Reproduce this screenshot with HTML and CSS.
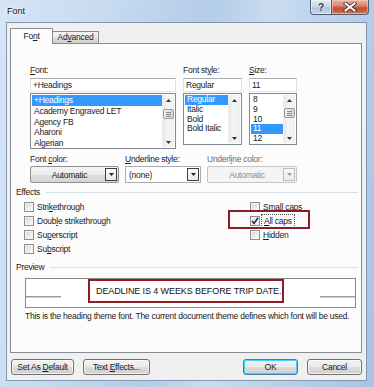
FILE: index.html
```html
<!DOCTYPE html>
<html>
<head>
<meta charset="utf-8">
<title>Font</title>
<link rel="stylesheet" href="styles.css">
</head>
<body>
<div class="window">
  <div class="titlebar">
    <span class="title">Font</span>
    <div class="caption">
      <div class="cap help">?</div>
      <div class="cap close">
        <svg width="14" height="10" viewBox="0 0 14 10"><path d="M2.5 1.5 L11.5 8.5 M11.5 1.5 L2.5 8.5" stroke="#3b2a28" stroke-width="3.6" stroke-linecap="square"/><path d="M2.5 1.5 L11.5 8.5 M11.5 1.5 L2.5 8.5" stroke="#ffffff" stroke-width="2" stroke-linecap="square"/></svg>
      </div>
    </div>
  </div>
  <div class="client">
    <div class="tabs">
      <div class="tab active">Fo<u>n</u>t</div>
      <div class="tab">Ad<u>v</u>anced</div>
    </div>
    <div class="panel">
      <div class="pickers">
        <div class="col col-font">
          <div class="lbl"><u>F</u>ont:</div>
          <div class="input">+Headings</div>
          <div class="list list-font">
            <div class="items">
              <div class="item sel">+Headings</div>
              <div class="item">Academy Engraved LET</div>
              <div class="item">Agency FB</div>
              <div class="item">Aharoni</div>
              <div class="item">Algerian</div>
            </div>
            <div class="sb">
              <div class="sb-btn"><svg width="5" height="3" viewBox="0 0 5 3"><path d="M0 3 L2.5 0 L5 3Z" fill="#333"/></svg></div>
              <div class="sb-thumb thumb-font"><i></i><i></i><i></i></div>
              <div class="sb-track"></div>
              <div class="sb-btn"><svg width="5" height="3" viewBox="0 0 5 3"><path d="M0 0 L2.5 3 L5 0Z" fill="#333"/></svg></div>
            </div>
          </div>
        </div>
        <div class="col col-style">
          <div class="lbl">Font st<u>y</u>le:</div>
          <div class="input">Regular</div>
          <div class="list list-short">
            <div class="items">
              <div class="item short sel">Regular</div>
              <div class="item short">Italic</div>
              <div class="item short">Bold</div>
              <div class="item short">Bold Italic</div>
            </div>
            <div class="sb">
              <div class="sb-btn"><svg width="5" height="3" viewBox="0 0 5 3"><path d="M0 3 L2.5 0 L5 3Z" fill="#333"/></svg></div>
              <div class="sb-track"></div>
              <div class="sb-btn"><svg width="5" height="3" viewBox="0 0 5 3"><path d="M0 0 L2.5 3 L5 0Z" fill="#333"/></svg></div>
            </div>
          </div>
        </div>
        <div class="col col-size">
          <div class="lbl"><u>S</u>ize:</div>
          <div class="input">11</div>
          <div class="list list-short">
            <div class="items">
              <div class="item short">8</div>
              <div class="item short">9</div>
              <div class="item short">10</div>
              <div class="item short sel">11</div>
              <div class="item short">12</div>
            </div>
            <div class="sb">
              <div class="sb-btn"><svg width="5" height="3" viewBox="0 0 5 3"><path d="M0 3 L2.5 0 L5 3Z" fill="#333"/></svg></div>
              <div class="sb-thumb thumb-size"><i></i><i></i><i></i></div>
              <div class="sb-track"></div>
              <div class="sb-btn"><svg width="5" height="3" viewBox="0 0 5 3"><path d="M0 0 L2.5 3 L5 0Z" fill="#333"/></svg></div>
            </div>
          </div>
        </div>
      </div>

      <div class="drops">
        <div class="dcol dcol-color">
          <div class="lbl">Font <u>c</u>olor:</div>
          <div class="combo combo-btn">
            <span class="combo-text center">Automatic</span>
            <span class="arrow dark"><svg width="5" height="3" viewBox="0 0 5 3"><path d="M0 0 L2.5 3 L5 0Z" fill="#222"/></svg></span>
          </div>
        </div>
        <div class="dcol dcol-ustyle">
          <div class="lbl"><u>U</u>nderline style:</div>
          <div class="combo combo-white">
            <span class="combo-text">(none)</span>
            <span class="arrow dark"><svg width="5" height="3" viewBox="0 0 5 3"><path d="M0 0 L2.5 3 L5 0Z" fill="#222"/></svg></span>
          </div>
        </div>
        <div class="dcol dcol-ucolor">
          <div class="lbl disabled-lbl">Underl<u>i</u>ne color:</div>
          <div class="combo combo-disabled">
            <span class="combo-text center">Automatic</span>
            <span class="arrow light"><svg width="5" height="3" viewBox="0 0 5 3"><path d="M0 0 L2.5 3 L5 0Z" fill="#9a9a9a"/></svg></span>
          </div>
        </div>
      </div>

      <div class="group-head"><span>Effects</span><span class="rule"></span></div>
      <div class="effects">
        <div class="ecol">
          <div class="chk"><span class="box"></span><span>Stri<u>k</u>ethrough</span></div>
          <div class="chk"><span class="box"></span><span>Doub<u>l</u>e strikethrough</span></div>
          <div class="chk"><span class="box"></span><span>Su<u>p</u>erscript</span></div>
          <div class="chk"><span class="box"></span><span>Su<u>b</u>script</span></div>
        </div>
        <div class="ecol">
          <div class="chk"><span class="box"></span><span>S<u>m</u>all caps</span></div>
          <div class="chk"><span class="box checked"><svg width="8" height="8" viewBox="0 0 8 8"><path d="M1 4 L3 6.5 L7 0.8" fill="none" stroke="#1e2f5a" stroke-width="1.5"/></svg></span><span class="focus"><u>A</u>ll caps</span></div>
          <div class="chk"><span class="box"></span><span><u>H</u>idden</span></div>
        </div>
        <div class="callout"></div>
      </div>

      <div class="group-head preview-head"><span>Preview</span><span class="rule"></span></div>
      <div class="preview">
        <span class="pline"></span>
        <span class="ptext">DEADLINE IS 4 WEEKS BEFORE TRIP DATE.</span>
        <span class="pline right"></span>
      </div>
      <div class="desc">This is the heading theme font. The current document theme defines which font will be used.</div>
    </div>

    <div class="buttons">
      <div class="btn w-default">Set As <u>D</u>efault</div>
      <div class="btn w-effects">Text <u>E</u>ffects...</div>
      <div class="btn ok focused">OK</div>
      <div class="btn cancel">Cancel</div>
    </div>
  </div>
</div>
</body>
</html>
```

FILE: styles.css
```css
* { box-sizing: border-box; }
html, body { margin: 0; padding: 0; }
body {
  width: 374px;
  height: 387px;
  overflow: hidden;
  font-family: "Liberation Sans", Arial, sans-serif;
  font-size: 8.5px;
  letter-spacing: -0.25px;
  color: #1b1b1b;
}
u { text-decoration-thickness: 1px; text-underline-offset: 1px; }

.window {
  width: 374px;
  height: 387px;
  display: flex;
  flex-direction: column;
  background: linear-gradient(100deg, #d6e5f5 0%, #c6daf0 25%, #b3cce8 48%, #c9dcf1 62%, #b7cfe9 80%, #a9c3e2 100%);
}

.titlebar {
  height: 22px;
  flex: none;
  display: flex;
  align-items: flex-start;
  padding-left: 7px;
}
.title {
  margin-top: 6px;
  font-size: 9px;
  line-height: 11px;
  letter-spacing: 0;
  color: #111;
  text-shadow: 0 0 3px #ffffff, 0 0 5px #ffffff;
}
.caption {
  margin-left: auto;
  margin-right: 5px;
  display: flex;
  height: 15px;
}
.cap {
  height: 15px;
  border: 1px solid #505e72;
  border-top: none;
  display: flex;
  align-items: center;
  justify-content: center;
}
.help {
  width: 22px;
  border-radius: 0 0 0 4px;
  background: linear-gradient(#dde8f4 0%, #c8d8ea 45%, #b3c7de 55%, #c3d5ea 100%);
  box-shadow: inset 0 0 0 1px rgba(255,255,255,0.5);
  font-size: 10px;
  font-weight: bold;
  color: #2b3a4c;
  text-shadow: 0 0 2px #fff;
  letter-spacing: 0;
}
.close {
  width: 37px;
  border-left: none;
  border-radius: 0 0 4px 0;
  background: linear-gradient(#eab0a2 0%, #d98a76 40%, #c7523b 55%, #c9573c 80%, #da8e6a 100%);
  box-shadow: inset 0 0 0 1px rgba(255,220,210,0.45);
}

.client {
  margin: 0 7px 0 6px;
  height: 359px;
  flex: none;
  background: #f0f0f0;
  border: 1px solid #8396ad;
  display: flex;
  flex-direction: column;
}

.tabs {
  display: flex;
  align-items: flex-end;
  height: 15px;
  margin: 5px 0 0 3px;
}
.tab {
  height: 12px;
  width: 47px;
  margin-left: -1px;
  border: 1px solid #898c95;
  border-bottom: none;
  background: linear-gradient(#f3f3f3 0%, #ebebeb 50%, #dddddd 51%, #cfcfcf 100%);
  text-align: center;
  line-height: 11px;
}
.tab.active {
  height: 16px;
  width: 43px;
  margin-left: 0;
  margin-bottom: -1px;
  position: relative;
  z-index: 1;
  background: #fcfcfc;
  line-height: 14px;
}

.panel {
  width: 352px;
  height: 310px;
  margin-left: 3px;
  border: 1px solid #898c95;
  background: #fcfcfc;
  position: relative;
}

.lbl { height: 11px; line-height: 11px; white-space: nowrap; }

.pickers {
  display: flex;
  align-items: flex-start;
  gap: 7px;
  margin: 21px 0 0 19px;
}
.col-font { width: 146px; }
.col-style { width: 59px; }
.col-size { width: 48px; }
.input {
  height: 14px;
  margin-top: 2px;
  border: 1px solid #abadb3;
  border-left-color: #e2e3ea;
  border-right-color: #dbdfe6;
  border-bottom-color: #e3e9ef;
  background: #fff;
  line-height: 12px;
  padding-left: 2px;
  white-space: nowrap;
  overflow: hidden;
}
.list {
  margin-top: 1px;
  border: 1px solid #828790;
  background: #fff;
  display: flex;
  padding: 1px;
}
.list-font { height: 56px; }
.list-short { height: 52px; }
.items { flex: 1; min-width: 0; }
.item {
  height: 10.75px;
  line-height: 10.75px;
  padding-left: 2px;
  white-space: nowrap;
  overflow: hidden;
}
.item.short { height: 9.8px; line-height: 9.8px; }
.item.sel { background: #3399ff; color: #fff; }

.sb {
  width: 12px;
  flex: none;
  display: flex;
  flex-direction: column;
  background: linear-gradient(90deg, #e7e7e7, #f5f5f5 40%, #f0f0f0);
  border-left: 1px solid #efefef;
}
.sb-btn {
  height: 10px;
  flex: none;
  display: flex;
  align-items: center;
  justify-content: center;
}
.sb-btn svg { display: block; }
.sb-track { flex: 1; }
.sb-thumb {
  height: 10px;
  flex: none;
  margin: 4px 0 0 0;
  border: 1px solid #9a9a9a;
  border-radius: 2px;
  background: linear-gradient(90deg, #f2f2f2, #e2e2e2 50%, #d2d2d2);
  display: flex;
  flex-direction: column;
  justify-content: center;
  align-items: center;
  gap: 1px;
}
.sb-thumb i { display: block; width: 5px; height: 1px; background: #8b8b8b; }
.thumb-size { margin-top: 3px; }

.drops {
  display: flex;
  gap: 6px;
  margin: 5px 0 0 19px;
}
.dcol-color { width: 89px; }
.dcol-ustyle { width: 76px; }
.dcol-ucolor { width: 90px; }
.disabled-lbl { color: #6d6d6d; }
.combo {
  height: 17px;
  margin-top: 1px;
  display: flex;
  align-items: center;
  padding: 1px;
}
.combo-btn {
  border: 1px solid #8e8f8f;
  border-radius: 2px;
  background: linear-gradient(#f4f4f4 0%, #ececec 50%, #dfdfdf 51%, #d6d6d6 100%);
}
.combo-white {
  border: 1px solid #abadb3;
  background: #fff;
}
.combo-disabled {
  border: 1px solid #c5c5c5;
  border-radius: 2px;
  background: #f4f4f4;
  color: #8d8d8d;
}
.combo-text { flex: 1; padding-left: 2px; white-space: nowrap; }
.combo-text.center { text-align: center; }
.arrow {
  width: 12px;
  height: 13px;
  flex: none;
  display: flex;
  align-items: center;
  justify-content: center;
  background: linear-gradient(#fbfbfb, #e9e9e9);
}
.arrow.dark { border: 1px solid #3f3f3f; }
.arrow.light { border: 1px solid #bdbdbd; }
.arrow svg { display: block; }

.group-head {
  display: flex;
  align-items: center;
  gap: 6px;
  height: 11px;
  margin: 4px 3px 0 5px;
  line-height: 11px;
}
.group-head .rule { flex: 1; height: 1px; background: #d5dfe5; }

.effects {
  display: grid;
  grid-template-columns: 226px auto;
  margin-top: 2px;
  padding-left: 13px;
  position: relative;
}
.chk {
  height: 14px;
  display: flex;
  align-items: center;
  gap: 3px;
  white-space: nowrap;
}
.box {
  width: 10px;
  height: 10px;
  flex: none;
  border: 1px solid #8f8f8f;
  background: linear-gradient(135deg, #d2d2d2 0%, #eeeeee 60%, #fbfbfb 100%);
  box-shadow: inset 0 0 0 1px #f3f3f3;
  display: flex;
  align-items: center;
  justify-content: center;
}
.box.checked { background: linear-gradient(135deg, #e2e2e2, #fafafa); }
.box svg { display: block; }
.focus { outline: 1px dotted #555; outline-offset: 1px; padding: 0 1px; }
.callout {
  position: absolute;
  left: 217px;
  top: 10px;
  width: 82px;
  height: 19px;
  border: 2px solid #8e1d23;
  pointer-events: none;
}

.preview-head { margin-top: 6px; }
.preview {
  width: 331px;
  height: 30px;
  margin: 5px 0 0 14px;
  border: 1px solid #8a8a8a;
  background: #fff;
  display: flex;
  align-items: flex-start;
}
.pline {
  width: 35px;
  height: 1px;
  margin-top: 17px;
  background: #9b9b9b;
  box-shadow: 0 1px 0 #d0d0d0;
  flex: none;
}
.pline.right { margin-left: auto; }
.ptext {
  margin-left: 27px;
  height: 24px;
  border: 2px solid #8e1d23;
  padding: 0 0 0 6px;
  width: 196px;
  font-size: 9px;
  letter-spacing: -0.1px;
  line-height: 20px;
  color: #111;
  white-space: nowrap;
}
.desc {
  margin: 3px 0 0 14px;
  height: 11px;
  line-height: 11px;
  white-space: nowrap;
}

.buttons {
  display: flex;
  gap: 9px;
  margin-top: 6px;
  padding: 0 4px;
}
.btn {
  height: 16px;
  border: 1px solid #707070;
  border-radius: 3px;
  background: linear-gradient(#f2f2f2 0%, #ebebeb 48%, #dddddd 52%, #cfcfcf 100%);
  box-shadow: inset 0 0 0 1px rgba(255,255,255,0.7);
  text-align: center;
  line-height: 14px;
  white-space: nowrap;
}
.w-default { width: 63px; }
.w-effects { width: 67px; }
.ok { width: 55px; margin-left: auto; }
.cancel { width: 55px; }
.btn.focused {
  border-color: #3c7fb1;
  box-shadow: inset 0 0 0 1px #48d1f7;
}
```
